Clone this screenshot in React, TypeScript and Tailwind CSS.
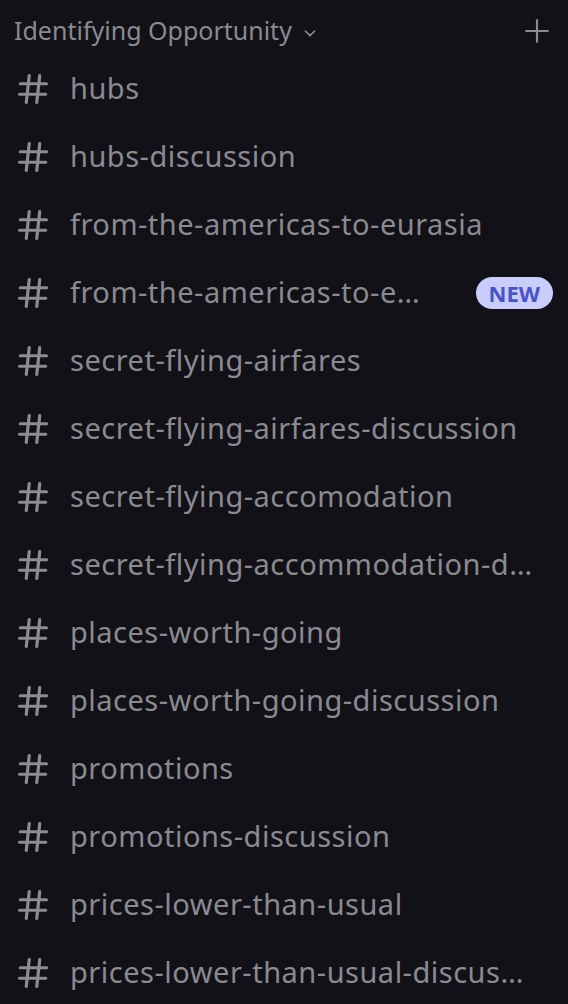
import React from 'react';

const channels: { name: string; badge?: boolean }[] = [
  { name: 'hubs' },
  { name: 'hubs-discussion' },
  { name: 'from-the-americas-to-eurasia' },
  { name: 'from-the-americas-to-eurasia-discussion', badge: true },
  { name: 'secret-flying-airfares' },
  { name: 'secret-flying-airfares-discussion' },
  { name: 'secret-flying-accomodation' },
  { name: 'secret-flying-accommodation-discussion' },
  { name: 'places-worth-going' },
  { name: 'places-worth-going-discussion' },
  { name: 'promotions' },
  { name: 'promotions-discussion' },
  { name: 'prices-lower-than-usual' },
  { name: 'prices-lower-than-usual-discussion' },
];

function HashIcon() {
  return (
    <svg width="36" height="36" viewBox="0 0 24 24" className="shrink-0 -ml-[1px] text-[#8c8c92]">
      <path
        d="M9.5 3 7.5 21M16.5 3l-2 18M3.5 8.5h17.5M3 15.5h17.5"
        stroke="currentColor"
        strokeWidth="2.1"
        strokeLinecap="round"
        fill="none"
      />
    </svg>
  );
}

export default function App() {
  return (
    <div
      className="w-[568px] h-[1004px] bg-[#121117] overflow-hidden"
      style={{ fontFamily: '"Noto Sans", "Open Sans", sans-serif' }}
    >
      <div className="h-[55px] flex items-center pl-[14px] pr-[18px] pt-[7px]">
        <span className="text-[25px] text-[#8a8a90]">Identifying Opportunity</span>
        <svg width="16" height="16" viewBox="0 0 24 24" className="ml-[10px] mt-[3px] text-[#8a8a90]">
          <path d="M5 9l7 7 7-7" stroke="currentColor" strokeWidth="2.4" fill="none" strokeLinecap="round" strokeLinejoin="round" />
        </svg>
        <div className="flex-1" />
        <svg width="26" height="26" viewBox="0 0 24 24" className="text-[#8a8a90]">
          <path d="M12 2v20M2 12h20" stroke="currentColor" strokeWidth="2" strokeLinecap="round" />
        </svg>
      </div>
      <div className="flex flex-col">
        {channels.map((c) => (
          <div key={c.name} className="h-[68px] flex items-center pl-[16px] pr-[15px]">
            <HashIcon />
            <span
              className={
                'ml-[19px] truncate text-[29px] text-[#8a8a90] tracking-[0.5px] -mt-[2px] ' +
                (c.badge ? 'max-w-[362px]' : 'pr-[18px]')
              }
            >
              {c.name}
            </span>
            {c.badge && (
              <>
                <div className="flex-1" />
                <span className="h-[32px] px-[13px] rounded-full bg-[#c9cdfb] text-[#4953c5] text-[22px] font-bold flex items-center leading-none">
                  NEW
                </span>
              </>
            )}
          </div>
        ))}
      </div>
    </div>
  );
}
